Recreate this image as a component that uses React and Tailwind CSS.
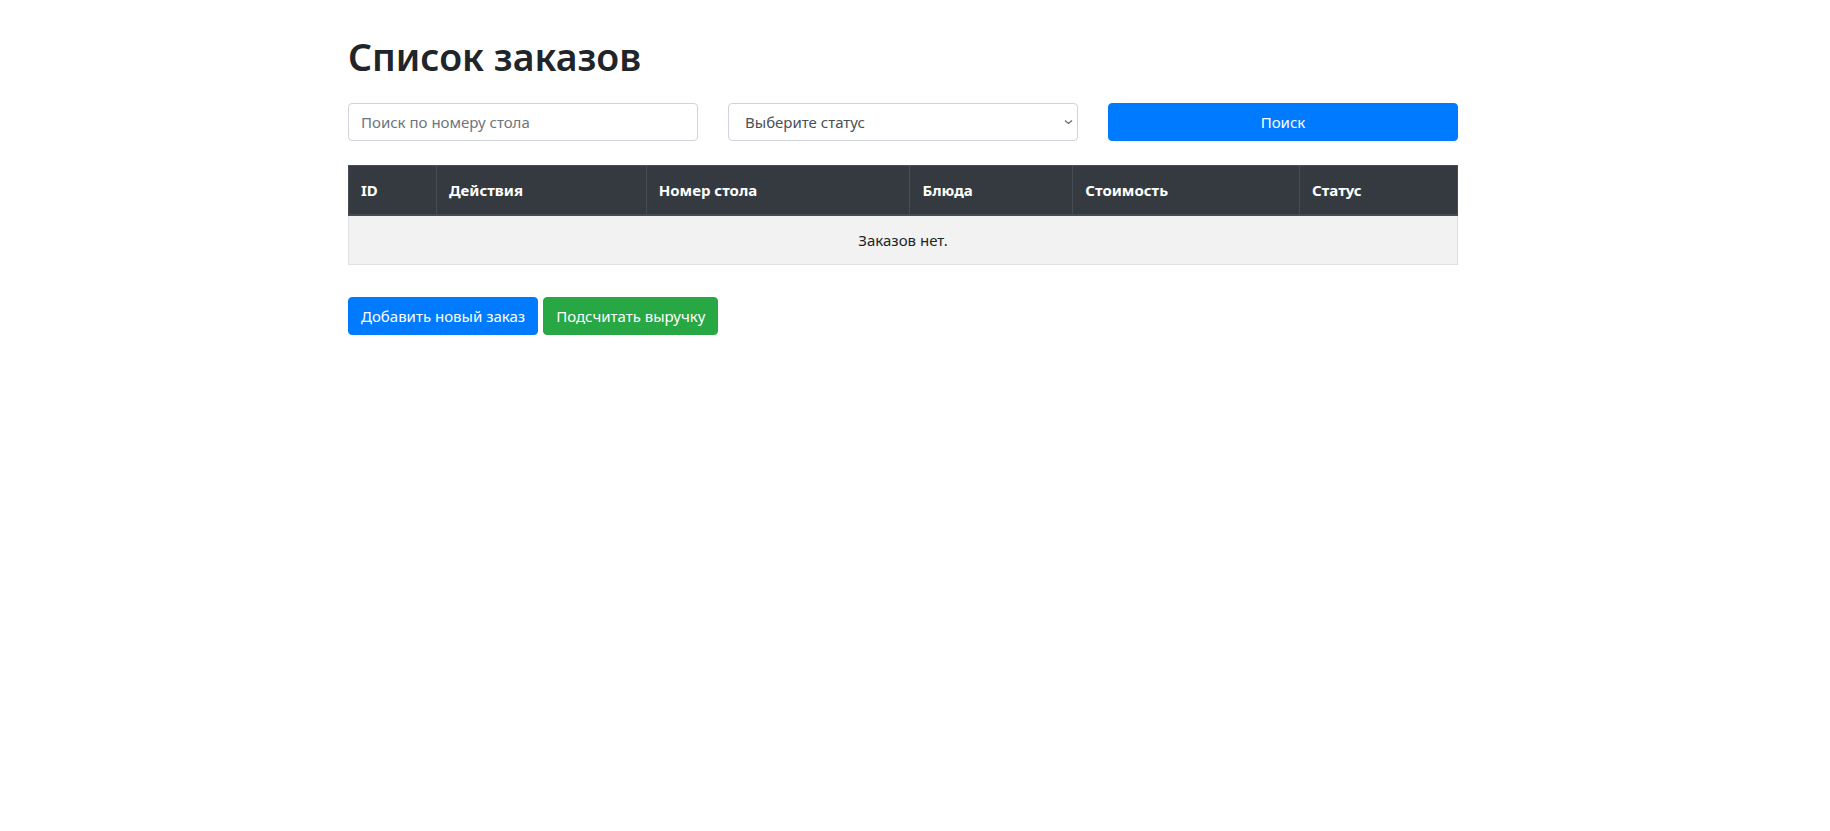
import React from 'react';

const columns = [
  { label: 'ID', w: 'w-[88px]' },
  { label: 'Действия', w: 'w-[210px]' },
  { label: 'Номер стола', w: 'w-[264px]' },
  { label: 'Блюда', w: 'w-[163px]' },
  { label: 'Стоимость', w: 'w-[227px]' },
  { label: 'Статус', w: 'w-[158px]' }
];

export default function App() {
  return (
    <div className="min-h-screen bg-white font-['Noto_Sans','Open_Sans',sans-serif] text-[#212529]">
      <div className="flex justify-center pr-6">
        <div className="w-[1110px] pt-[33px]">
          <h1 className="mb-[22px] text-[37.5px] font-semibold leading-[48px] text-[#212529]">Список заказов</h1>

          <div className="grid grid-cols-3 gap-[30px]">
            <input
              type="text"
              placeholder="Поиск по номеру стола"
              className="h-[38px] rounded-[4px] border border-[#ced4da] px-3 text-[15px] text-[#495057] outline-none placeholder:text-[#6c757d]"
            />
            <div className="relative">
              <select className="h-[38px] w-full appearance-none rounded-[4px] border border-[#ced4da] bg-white pl-4 pr-7 text-[15px] text-[#495057] outline-none">
                <option>Выберите статус</option>
                <option>Новый</option>
                <option>Готовится</option>
                <option>Выдан</option>
              </select>
              <svg className="pointer-events-none absolute right-[5px] top-[16px] h-[6px] w-[9px]" viewBox="0 0 9 6" fill="none">
                <path d="M1 1.5 L4.5 4.5 L8 1.5" stroke="#6b6b6b" strokeWidth="1.3" />
              </svg>
            </div>
            <button className="h-[38px] rounded-[4px] border border-[#007bff] bg-[#007bff] text-[15px] text-white">Поиск</button>
          </div>

          <table className="mt-[24px] w-full border-collapse text-[15px]">
            <thead>
              <tr className="bg-[#343a40] text-white">
                {columns.map((c) => (
                  <th key={c.label} className={`${c.w} border border-b-2 border-[#454d55] px-3 py-3 text-left font-bold leading-6`}>
                    {c.label}
                  </th>
                ))}
              </tr>
            </thead>
            <tbody>
              <tr className="bg-[#f2f2f2]">
                <td colSpan={6} className="border border-[#dee2e6] px-3 py-3 text-center leading-6">
                  Заказов нет.
                </td>
              </tr>
            </tbody>
          </table>

          <div className="mt-8 flex gap-[5px]">
            <button className="h-[38px] rounded-[4px] border border-[#007bff] bg-[#007bff] px-3 text-[15px] text-white">
              Добавить новый заказ
            </button>
            <button className="h-[38px] rounded-[4px] border border-[#28a745] bg-[#28a745] px-3 text-[15px] text-white">
              Подсчитать выручку
            </button>
          </div>
        </div>
      </div>
    </div>
  );
}
